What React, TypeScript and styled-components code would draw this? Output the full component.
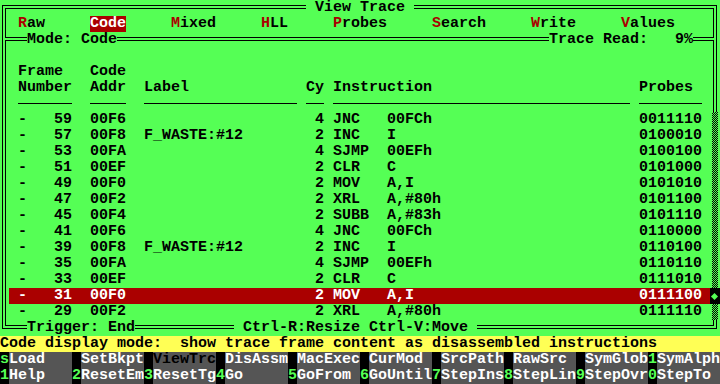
import React from "react";
import styled, { createGlobalStyle, css } from "styled-components";

const C = {
  green: "#55FF55",
  black: "#000000",
  red: "#AA0000",
  white: "#FFFFFF",
  yellow: "#FFFF55",
  gray: "#555555",
};

const Global = createGlobalStyle`
  html, body { margin: 0; padding: 0; background: ${C.green}; }
  body { width: 720px; height: 384px; overflow: hidden; }
`;

const Screen = styled.div`
  display: grid;
  grid-template-columns: repeat(80, 9px);
  grid-template-rows: repeat(24, 16px);
  width: 720px;
  height: 384px;
  background: ${C.green};
  color: ${C.black};
  font-family: "Liberation Mono", "DejaVu Sans Mono", monospace;
  font-weight: 700;
  font-size: 15px;
  line-height: 16px;
  white-space: pre;
  overflow: hidden;
`;

/* ---------- window frame (double lines) ---------- */
const Frame = styled.div`
  grid-row: 1 / 22;
  grid-column: 1 / 81;
  margin: 5px 3px 7px 2px;
  border: 1px solid ${C.black};
  padding: 2px;
  display: flex;
  flex-direction: column;
  gap: 2px;
  min-height: 0;
`;

const MenuPane = styled.div`
  border: 1px solid ${C.black};
  padding: 7px 2px 5px 3px;
  height: 16px;
`;

const TablePane = styled.div`
  flex: 1;
  border: 1px solid ${C.black};
  padding: 23px 2px 5px 3px;
  display: flex;
  flex-direction: column;
`;

const Legend = styled.div<{ $row: number; $col: number; $len: number }>`
  grid-row: ${(p) => p.$row + 1};
  grid-column: ${(p) => p.$col + 1} / span ${(p) => p.$len};
  background: ${C.green};
  z-index: 1;
`;

/* ---------- menu ---------- */
const MenuBar = styled.div`
  display: grid;
  grid-template-columns: 72px 81px 90px 72px 99px 99px 90px 90px;
  padding-left: 9px;
  height: 16px;
`;

const MenuItem = styled.span<{ $active?: boolean }>`
  justify-self: start;
  ${(p) =>
    p.$active &&
    css`
      background: ${C.red};
      color: ${C.white};
    `}
`;

const Hot = styled.span<{ $active?: boolean }>`
  color: ${(p) => (p.$active ? C.white : C.red)};
`;

/* ---------- table ---------- */
const tableColumns = css`
  display: grid;
  grid-template-columns: 9px 9px 45px 18px 36px 18px 153px 9px 18px 9px 54px 243px 9px 63px 9px;
  height: 16px;
`;

const HeaderLine = styled.div`
  ${tableColumns}
`;

const HeadText = styled.span<{ $from: number; $to?: number }>`
  grid-column: ${(p) => p.$from} / ${(p) => p.$to ?? p.$from + 1};
`;

const RuleLine = styled.div`
  ${tableColumns}
`;

const Rule = styled.span<{ $from: number; $to?: number }>`
  grid-column: ${(p) => p.$from} / ${(p) => p.$to ?? p.$from + 1};
  height: 7px;
  border-bottom: 1px solid ${C.black};
`;

const TraceRow = styled.div<{ $selected?: boolean }>`
  ${tableColumns}
  background: ${(p) => (p.$selected ? C.red : "transparent")};
  color: ${(p) => (p.$selected ? C.white : C.black)};
`;

const Dash = styled.span`
  grid-column: 2;
`;
const Num = styled.span`
  grid-column: 3;
  text-align: right;
`;
const Addr = styled.span`
  grid-column: 5;
`;
const Label = styled.span`
  grid-column: 7;
`;
const Cy = styled.span`
  grid-column: 9;
  text-align: right;
`;
const Mnem = styled.span`
  grid-column: 11;
`;
const Operand = styled.span`
  grid-column: 12;
`;
const Probe = styled.span`
  grid-column: 14;
`;

/* ---------- scrollbar ---------- */
const ScrollBar = styled.div`
  grid-row: 8 / 21;
  grid-column: 80;
  z-index: 1;
  display: flex;
  flex-direction: column;
`;

const ScrollTrack = styled.div<{ $rows: number }>`
  height: ${(p) => p.$rows * 16}px;
  padding: 0 2px 0 1px;
  background: repeating-conic-gradient(${C.black} 0 25%, ${C.green} 0 50%) content-box 0 0 / 2px 2px,
    linear-gradient(${C.green}, ${C.green}) border-box;
`;

const Thumb = styled.div`
  height: 16px;
  margin-left: -1px;
  background: ${C.black};
  display: flex;
  align-items: center;
  justify-content: center;
  padding-right: 1px;
`;

const Diamond = styled.span`
  width: 5px;
  height: 5px;
  background: ${C.green};
  transform: rotate(45deg);
`;

/* ---------- bottom bars ---------- */
const StatusLine = styled.div`
  grid-row: 22;
  grid-column: 1 / 81;
  background: ${C.yellow};
  color: ${C.black};
`;

const KeyBar = styled.div<{ $row: number }>`
  grid-row: ${(p) => p.$row + 1};
  grid-column: 1 / 81;
  display: grid;
  grid-template-columns: repeat(10, 9px 63px);
`;

const KeyCap = styled.span`
  background: ${C.black};
  color: ${C.green};
`;

const KeyLabel = styled.span<{ $disabled?: boolean }>`
  background: ${C.gray};
  color: ${(p) => (p.$disabled ? C.black : C.white)};
`;

/* ---------- data ---------- */
const menu = [
  { hot: "R", rest: "aw" },
  { hot: "C", rest: "ode", active: true },
  { hot: "M", rest: "ixed" },
  { hot: "H", rest: "LL" },
  { hot: "P", rest: "robes" },
  { hot: "S", rest: "earch" },
  { hot: "W", rest: "rite" },
  { hot: "V", rest: "alues" },
];

type Row = [string, string, string, string, string, string, string];
const rows: Row[] = [
  ["59", "00F6", "", "4", "JNC", "00FCh", "0011110"],
  ["57", "00F8", "F_WASTE:#12", "2", "INC", "I", "0100010"],
  ["53", "00FA", "", "4", "SJMP", "00EFh", "0100100"],
  ["51", "00EF", "", "2", "CLR", "C", "0101000"],
  ["49", "00F0", "", "2", "MOV", "A,I", "0101010"],
  ["47", "00F2", "", "2", "XRL", "A,#80h", "0101100"],
  ["45", "00F4", "", "2", "SUBB", "A,#83h", "0101110"],
  ["41", "00F6", "", "4", "JNC", "00FCh", "0110000"],
  ["39", "00F8", "F_WASTE:#12", "2", "INC", "I", "0110100"],
  ["35", "00FA", "", "4", "SJMP", "00EFh", "0110110"],
  ["33", "00EF", "", "2", "CLR", "C", "0111010"],
  ["31", "00F0", "", "2", "MOV", "A,I", "0111100"],
  ["29", "00F2", "", "2", "XRL", "A,#80h", "0111110"],
];
const selectedIndex = 11;

const keysTop: { key: string; label: string; disabled?: boolean }[] = [
  { key: "s", label: "Load" },
  { key: " ", label: "SetBkpt" },
  { key: " ", label: "ViewTrc", disabled: true },
  { key: " ", label: "DisAssm" },
  { key: " ", label: "MacExec" },
  { key: " ", label: "CurMod" },
  { key: " ", label: "SrcPath" },
  { key: " ", label: "RawSrc" },
  { key: " ", label: "SymGlob" },
  { key: "1", label: "SymAlph" },
];

const keysBottom = [
  { key: "1", label: "Help" },
  { key: "2", label: "ResetEm" },
  { key: "3", label: "ResetTg" },
  { key: "4", label: "Go" },
  { key: "5", label: "GoFrom" },
  { key: "6", label: "GoUntil" },
  { key: "7", label: "StepIns" },
  { key: "8", label: "StepLin" },
  { key: "9", label: "StepOvr" },
  { key: "0", label: "StepTo" },
];

export default function App() {
  return (
    <>
      <Global />
      <Screen>
        <Frame>
          <MenuPane>
            <MenuBar>
              {menu.map((m) => (
                <MenuItem key={m.hot} $active={m.active}>
                  <Hot $active={m.active}>{m.hot}</Hot>
                  {m.rest}
                </MenuItem>
              ))}
            </MenuBar>
          </MenuPane>
          <TablePane>
            <HeaderLine>
              <HeadText $from={2} $to={4}>Frame</HeadText>
              <HeadText $from={5}>Code</HeadText>
            </HeaderLine>
            <HeaderLine>
              <HeadText $from={2} $to={4}>Number</HeadText>
              <HeadText $from={5}>Addr</HeadText>
              <HeadText $from={7}>Label</HeadText>
              <HeadText $from={9}>Cy</HeadText>
              <HeadText $from={11} $to={13}>Instruction</HeadText>
              <HeadText $from={14}>Probes</HeadText>
            </HeaderLine>
            <RuleLine>
              <Rule $from={2} $to={4} />
              <Rule $from={5} />
              <Rule $from={7} />
              <Rule $from={9} />
              <Rule $from={11} $to={13} />
              <Rule $from={14} />
            </RuleLine>
            {rows.map((r, i) => (
              <TraceRow key={r[0]} $selected={i === selectedIndex}>
                <Dash>-</Dash>
                <Num>{r[0]}</Num>
                <Addr>{r[1]}</Addr>
                <Label>{r[2]}</Label>
                <Cy>{r[3]}</Cy>
                <Mnem>{r[4]}</Mnem>
                <Operand>{r[5]}</Operand>
                <Probe>{r[6]}</Probe>
              </TraceRow>
            ))}
          </TablePane>
        </Frame>

        <Legend $row={0} $col={34} $len={12}>{" View Trace "}</Legend>
        <Legend $row={2} $col={3} $len={10}>Mode: Code</Legend>
        <Legend $row={2} $col={61} $len={16}>{"Trace Read:   9%"}</Legend>
        <Legend $row={20} $col={3} $len={12}>Trigger: End</Legend>
        <Legend $row={20} $col={26} $len={27}>{" Ctrl-R:Resize Ctrl-V:Move "}</Legend>

        <ScrollBar>
          <ScrollTrack $rows={11} />
          <Thumb>
            <Diamond />
          </Thumb>
          <ScrollTrack $rows={1} />
        </ScrollBar>

        <StatusLine>{"Code display mode:  show trace frame content as disassembled instructions"}</StatusLine>

        <KeyBar $row={22}>
          {keysTop.map((k) => (
            <React.Fragment key={k.label}>
              <KeyCap>{k.key}</KeyCap>
              <KeyLabel $disabled={k.disabled}>{k.label}</KeyLabel>
            </React.Fragment>
          ))}
        </KeyBar>
        <KeyBar $row={23}>
          {keysBottom.map((k) => (
            <React.Fragment key={k.label}>
              <KeyCap>{k.key}</KeyCap>
              <KeyLabel>{k.label}</KeyLabel>
            </React.Fragment>
          ))}
        </KeyBar>
      </Screen>
    </>
  );
}
